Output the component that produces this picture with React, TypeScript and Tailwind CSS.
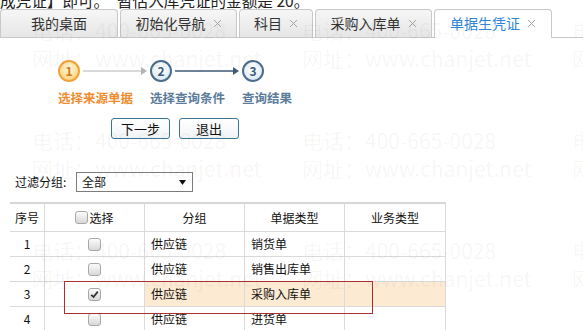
import React from 'react';

const tabs = [
  { label: '我的桌面', width: 'w-[118px]', close: false, active: false },
  { label: '初始化导航', width: 'w-[117px]', close: true, active: false },
  { label: '科目', width: 'w-[74px]', close: true, active: false },
  { label: '采购入库单', width: 'w-[117px]', close: true, active: false },
  { label: '单据生凭证', width: 'w-[118px]', close: true, active: true },
];

const rows = [
  { no: 1, group: '供应链', type: '销货单', checked: false },
  { no: 2, group: '供应链', type: '销售出库单', checked: false },
  { no: 3, group: '供应链', type: '采购入库单', checked: true },
  { no: 4, group: '供应链', type: '进货单', checked: false },
];

function CloseIcon() {
  return (
    <svg width="9" height="9" viewBox="0 0 9 9" className="ml-[7px] shrink-0">
      <path d="M1 1L8 8M8 1L1 8" stroke="#a3a3a3" strokeWidth="1" />
    </svg>
  );
}

function Checkbox({ checked }: { checked?: boolean }) {
  return (
    <span className="inline-flex h-[13px] w-[13px] items-center justify-center rounded-[3px] border border-[#a8a8a8] bg-gradient-to-b from-[#fbfbfb] to-[#d8d8d8]">
      {checked && (
        <svg width="9" height="9" viewBox="0 0 9 9">
          <path d="M1.2 4.8L3.5 7L7.8 1.6" fill="none" stroke="#333" strokeWidth="1.8" />
        </svg>
      )}
    </span>
  );
}

function Arrow({ color, width }: { color: string; width: number }) {
  return (
    <svg width="70" height="10" viewBox="0 0 70 10" className="shrink-0">
      <line x1="3" y1="5" x2="62" y2="5" stroke={color} strokeWidth={width} />
      <path d="M61 1L67 5L61 9Z" fill={color} />
    </svg>
  );
}

export default function App() {
  return (
    <div className="relative h-[330px] w-[583px] overflow-hidden bg-white font-['Noto_Sans_CJK_SC','Noto_Sans',sans-serif] text-[#111]">
      {/* text above, cut by the viewport */}
      <div className="h-[9px] overflow-hidden">
        <p className="-mt-[9px] whitespace-nowrap text-[15.6px] leading-[18px] text-[#222]">
          成凭证】即可。　暂估入库凭证的金额是 20。
        </p>
      </div>

      {/* tabs */}
      <div className="flex h-[29px] items-end gap-[2px] border-b border-[#c8c8c8]">
        {tabs.map((t) => (
          <div
            key={t.label}
            className={
              t.active
                ? `${t.width} -mb-px flex h-[29px] shrink-0 items-center justify-center rounded-t-[4px] border border-b-0 border-[#c8c8c8] bg-white pb-px text-[14px] text-[#2f86d8]`
                : `${t.width} flex h-[28px] shrink-0 items-center justify-center rounded-t-[4px] border border-b-0 border-[#c8c8c8] bg-gradient-to-b from-[#f6f6f6] to-[#e6e6e6] text-[14px] text-[#333]`
            }
          >
            <span>{t.label}</span>
            {t.close && <CloseIcon />}
          </div>
        ))}
      </div>

      {/* steps */}
      <div className="mt-[22px] pl-[58px]">
        <div className="flex items-center">
          <div className="flex h-[22px] w-[22px] items-center justify-center rounded-full border-2 border-[#f2a23a] bg-[radial-gradient(circle_at_50%_35%,#fff7dc,#fbcd68)] text-[12px] font-bold text-[#cf7a1f]">
            1
          </div>
          <Arrow color="#b3b3b3" width={1} />
          <div className="flex h-[22px] w-[22px] items-center justify-center rounded-full border-2 border-[#4c6c8b] bg-[radial-gradient(circle_at_50%_35%,#ffffff,#d6e6f4)] text-[12px] font-bold text-[#3b5c7c]">
            2
          </div>
          <Arrow color="#3e5a74" width={1.5} />
          <div className="flex h-[22px] w-[22px] items-center justify-center rounded-full border-2 border-[#4c6c8b] bg-[radial-gradient(circle_at_50%_35%,#ffffff,#d6e6f4)] text-[12px] font-bold text-[#3b5c7c]">
            3
          </div>
        </div>
        <div className="mt-[8px] flex text-[12.5px] font-bold leading-[16px]">
          <span className="w-[92px] text-[#ef8c2e]">选择来源单据</span>
          <span className="w-[92px] text-[#5b7b9b]">选择查询条件</span>
          <span className="text-[#5b7b9b]">查询结果</span>
        </div>
      </div>

      {/* buttons */}
      <div className="mt-[12px] flex gap-[9px] pl-[111px]">
        <button className="h-[21px] w-[59px] rounded-[3px] border border-[#3a7594] bg-gradient-to-b from-white to-[#f1f4f6] text-[13px] leading-none text-[#111]">
          下一步
        </button>
        <button className="h-[21px] w-[60px] rounded-[3px] border border-[#3a7594] bg-gradient-to-b from-white to-[#f1f4f6] text-[13px] leading-none text-[#111]">
          退出
        </button>
      </div>

      {/* filter */}
      <div className="mt-[33px] flex h-[20px] items-center pl-[15px] text-[12px]">
        <span className="w-[61px]">过滤分组:</span>
        <div className="flex h-[20px] w-[117px] items-center justify-between border border-[#7c7c7c] pl-[5px] pr-[6px]">
          <span>全部</span>
          <svg width="7" height="5" viewBox="0 0 7 5">
            <path d="M0 0H7L3.5 5Z" fill="#111" />
          </svg>
        </div>
      </div>

      {/* table */}
      <div className="relative ml-[10px] mt-[10px] w-[436px] border-t-2 border-[#d6d6d6] text-[12px]">
        <div className="grid h-[28px] grid-cols-[35px_100px_100px_100px_101px] border-b border-[#dadada]">
          <div className="flex items-center justify-center border-r border-[#dadada]">序号</div>
          <div className="flex items-center justify-center gap-[1px] border-r border-[#dadada]">
            <Checkbox />
            <span>选择</span>
          </div>
          <div className="flex items-center justify-center border-r border-[#dadada]">分组</div>
          <div className="flex items-center justify-center border-r border-[#dadada]">单据类型</div>
          <div className="flex items-center justify-center border-r border-[#dadada]">业务类型</div>
        </div>
        {rows.map((r) => (
          <div key={r.no} className="grid h-[25px] grid-cols-[35px_100px_100px_100px_101px] border-b border-[#dadada]">
            <div className="flex items-center justify-center border-r border-[#dadada]">{r.no}</div>
            <div className="flex items-center justify-center border-r border-[#dadada]">
              <Checkbox checked={r.checked} />
            </div>
            <div className={`flex items-center border-r border-[#dadada] pl-[6px] ${r.checked ? 'bg-[#fdead3]' : ''}`}>{r.group}</div>
            <div className={`flex items-center border-r border-[#dadada] pl-[6px] ${r.checked ? 'bg-[#fdead3]' : ''}`}>{r.type}</div>
            <div className={`border-r border-[#dadada] ${r.checked ? 'bg-[#fdead3]' : ''}`} />
          </div>
        ))}
        {/* annotation box */}
        <div className="pointer-events-none absolute left-[54px] top-[77px] h-[33px] w-[309px] border border-[#a8302f]" />
      </div>

      {/* watermark */}
      <div className="pointer-events-none absolute inset-0 grid auto-rows-[110px] grid-cols-[repeat(3,270px)] pl-[32px] pt-[16px] text-[21px] leading-[28px] text-black/[0.05]">
        {Array.from({ length: 9 }).map((_, i) => (
          <div key={i} className="whitespace-nowrap">
            <p>电话：400-665-0028</p>
            <p>网址：www.chanjet.net</p>
          </div>
        ))}
      </div>
    </div>
  );
}
